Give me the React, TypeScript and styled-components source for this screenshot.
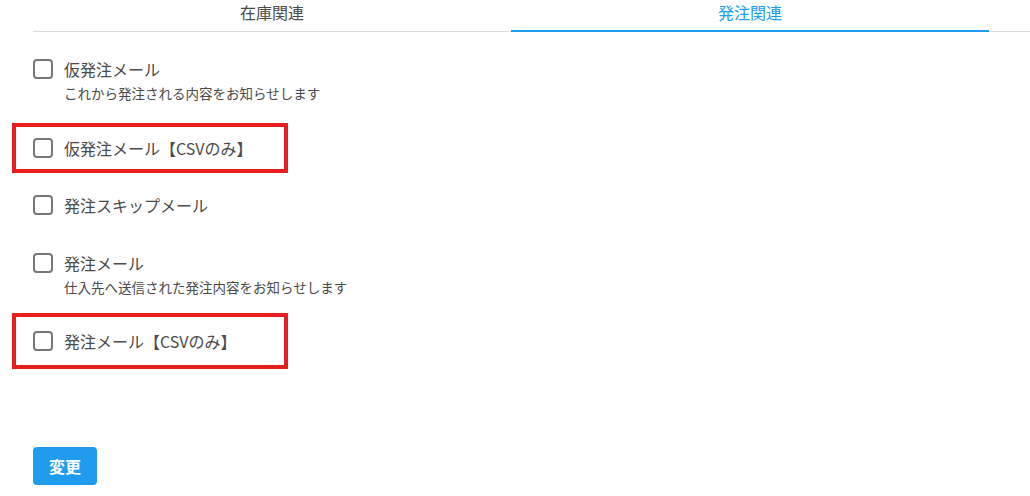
import styled, { createGlobalStyle } from 'styled-components';

const GlobalStyle = createGlobalStyle`
  html, body {
    margin: 0;
    padding: 0;
    background: #ffffff;
  }
  body {
    font-family: "Noto Sans CJK JP", "Noto Sans", "Liberation Sans", sans-serif;
    color: #4a4a4a;
  }
`;

const Page = styled.div`
  width: 1030px;
  height: 496px;
  overflow: hidden;
  padding-left: 33px;
  box-sizing: border-box;
`;

const TabList = styled.ul`
  display: flex;
  list-style: none;
  margin: 0;
  padding: 0;
  border-bottom: 1px solid #dbdbdb;
`;

const TabItem = styled.li<{ $active?: boolean }>`
  width: 478px;
  height: 32px;
  box-sizing: border-box;
  display: flex;
  justify-content: center;
  align-items: flex-start;
  font-size: 16px;
  line-height: 25px;
  color: ${({ $active }) => ($active ? '#209cee' : '#4a4a4a')};
  border-bottom: 2px solid ${({ $active }) => ($active ? '#209cee' : 'transparent')};
  margin-bottom: -1px;
  cursor: pointer;
`;

const Options = styled.div`
  display: flex;
  flex-direction: column;
  gap: 33.5px;
  padding-top: 25px;
`;

// red annotation frame drawn over the option row
const Option = styled.div<{ $frame?: number }>`
  position: relative;
  display: flex;
  flex-direction: column;

  &::after {
    content: '';
    display: ${({ $frame }) => ($frame ? 'block' : 'none')};
    position: absolute;
    left: -21px;
    top: ${({ $frame = 0 }) => 12 - $frame}px;
    width: 276px;
    height: ${({ $frame = 0 }) => $frame * 2}px;
    border: 4px solid #e61e1e;
    box-sizing: border-box;
    pointer-events: none;
  }
`;

const Label = styled.label`
  display: flex;
  align-items: center;
  gap: 11px;
  height: 24px;
  font-size: 16px;
  color: #4a4a4a;
  cursor: pointer;
`;

const Box = styled.input.attrs({ type: 'checkbox' })`
  appearance: none;
  width: 20px;
  height: 20px;
  margin: 0;
  border: 2px solid #777777;
  border-radius: 4px;
  box-sizing: border-box;
  background: #ffffff;
`;

const Hint = styled.p`
  margin: 3px 0 0 31px;
  font-size: 13.5px;
  line-height: 18px;
  color: #4a4a4a;
`;

const SubmitButton = styled.button`
  margin-top: 94px;
  width: 64px;
  height: 38px;
  border: none;
  border-radius: 4px;
  background: #209cee;
  color: #ffffff;
  font-family: inherit;
  font-size: 16px;
  font-weight: bold;
  cursor: pointer;
`;

const options = [
  { name: '仮発注メール', hint: 'これから発注される内容をお知らせします' },
  { name: '仮発注メール【CSVのみ】', frame: 25 },
  { name: '発注スキップメール' },
  { name: '発注メール', hint: '仕入先へ送信された発注内容をお知らせします' },
  { name: '発注メール【CSVのみ】', frame: 28 },
];

export default function App() {
  return (
    <Page>
      <GlobalStyle />
      <TabList>
        <TabItem>在庫関連</TabItem>
        <TabItem $active>発注関連</TabItem>
      </TabList>
      <Options>
        {options.map((o) => (
          <Option key={o.name} $frame={o.frame}>
            <Label>
              <Box />
              {o.name}
            </Label>
            {o.hint && <Hint>{o.hint}</Hint>}
          </Option>
        ))}
      </Options>
      <SubmitButton>変更</SubmitButton>
    </Page>
  );
}
